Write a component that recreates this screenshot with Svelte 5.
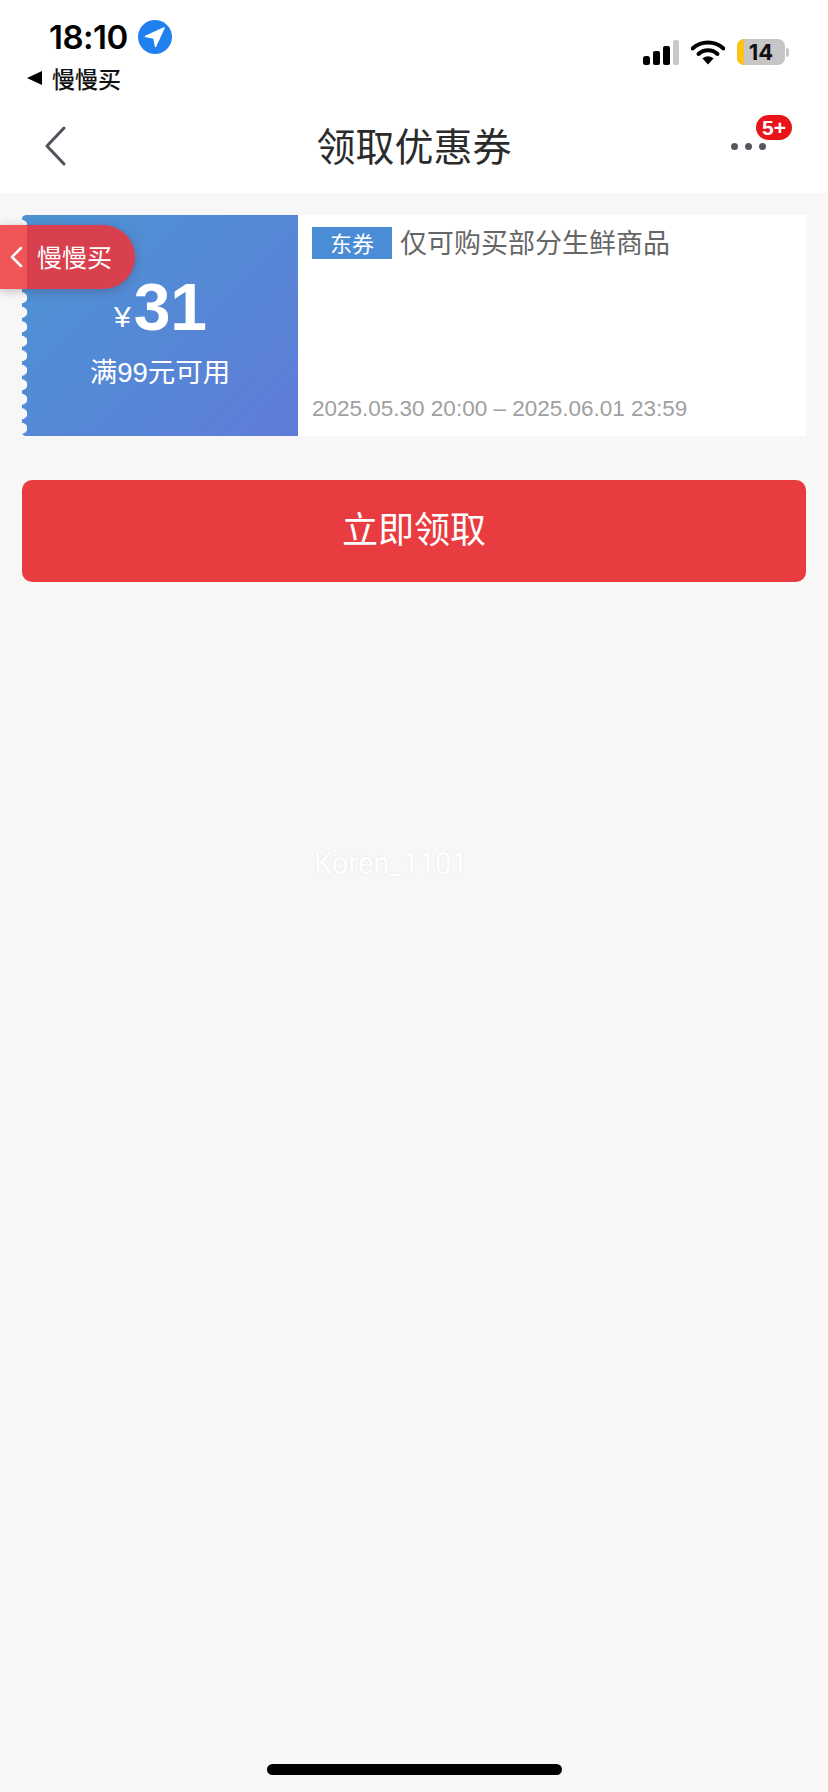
<script>
	const coupon = {
		price: '31',
		rule: '满99元可用',
		tag: '东券',
		title: '仅可购买部分生鲜商品',
		period: '2025.05.30 20:00 – 2025.06.01 23:59'
	};
</script>

<div class="page">
	<header class="top">
		<div class="status">
			<div class="status-left">
				<div class="time-row">
					<span class="time">18:10</span>
					<svg class="loc" width="34" height="34" viewBox="0 0 34 34">
						<circle cx="17" cy="17" r="17" fill="#1f80ee" />
						<path d="M26 8 L7.500 16.500 L16 18 L17.500 26.500 Z" fill="#fff" stroke="#fff" stroke-width="1.500" stroke-linejoin="round" />
					</svg>
				</div>
				<div class="return-row">
					<span class="return-arrow"></span>
					<span class="return-label">慢慢买</span>
				</div>
			</div>
			<div class="status-right">
				<svg width="36" height="25" viewBox="0 0 36 25">
					<rect x="0" y="16" width="7" height="9" rx="2.500" fill="#000" />
					<rect x="10" y="11" width="7" height="14" rx="2" fill="#000" />
					<rect x="20" y="6" width="7" height="19" rx="2" fill="#000" />
					<rect x="30" y="0" width="6" height="25" rx="2" fill="#c8c8c8" />
				</svg>
				<svg class="wifi" width="34" height="25" viewBox="0 0 34 25">
					<path d="M1.500 8.500 C10 0.500 24 0.500 32.500 8.500" fill="none" stroke="#000" stroke-width="4" stroke-linecap="round" />
					<path d="M7.500 14 C13 9 21 9 26.500 14" fill="none" stroke="#000" stroke-width="4" stroke-linecap="round" />
					<path d="M11.500 18.500 C15 15.500 19 15.500 22.500 18.500 L17 24.500 Z" fill="#000" />
				</svg>
				<div class="battery">
					<div class="battery-body">
						<span class="battery-fill"></span>
						<span class="battery-num">14</span>
					</div>
					<span class="battery-nub"></span>
				</div>
			</div>
		</div>

		<nav class="nav">
			<svg class="back" width="22" height="40" viewBox="0 0 22 40">
				<path d="M20 2 L3 20 L20 38" fill="none" stroke="#4e525a" stroke-width="3" stroke-linecap="round" stroke-linejoin="round" />
			</svg>
			<h1>领取优惠券</h1>
			<div class="more">
				<span class="dot"></span>
				<span class="dot"></span>
				<span class="dot"></span>
				<span class="badge">5+</span>
			</div>
		</nav>
	</header>

	<main class="content">
		<section class="coupon">
			<div class="coupon-left">
				<div class="amount">
					<span class="yen">¥</span><span class="price">{coupon.price}</span>
				</div>
				<div class="rule">{coupon.rule}</div>
			</div>
			<div class="coupon-right">
				<div class="title-row">
					<span class="tag">{coupon.tag}</span>
					<span class="title">{coupon.title}</span>
				</div>
				<div class="period">{coupon.period}</div>
			</div>
		</section>

		<button class="claim"><span>立即领取</span></button>
	</main>

	<div class="home-bar"></div>

	<!-- floating return pill, sits over the coupon -->
	<div class="float-back">
		<span class="float-arrow">
			<svg width="14" height="22" viewBox="0 0 14 22">
				<path d="M12 2 L3 11 L12 20" fill="none" stroke="#fff" stroke-width="2.500" stroke-linecap="round" stroke-linejoin="round" />
			</svg>
		</span>
		<span class="float-label">慢慢买</span>
	</div>

	<div class="watermark">Koren_1101</div>
</div>

<style>
	:global(body) {
		background: #f7f7f7;
	}

	.page {
		position: relative;
		width: 828px;
		height: 1792px;
		display: flex;
		flex-direction: column;
		overflow: hidden;
		background: #f7f7f7;
		font-family: "Liberation Sans", "Noto Sans CJK SC", sans-serif;
	}

	.top {
		background: #fff;
		height: 193px;
	}

	.status {
		height: 100px;
		display: flex;
		justify-content: space-between;
	}

	.status-left {
		padding: 20px 0 0 27px;
	}

	.time-row {
		display: flex;
		align-items: center;
		height: 34px;
		padding-left: 22px;
		gap: 10px;
	}

	.time {
		font-family: Inter, sans-serif;
		font-size: 33px;
		font-weight: 600;
		letter-spacing: -0.5px;
		color: #000;
	}

	.return-row {
		display: flex;
		align-items: center;
		gap: 10px;
		margin-top: 9px;
		height: 30px;
	}

	.return-arrow {
		width: 0;
		height: 0;
		border-top: 7px solid transparent;
		border-bottom: 7px solid transparent;
		border-right: 15px solid #000;
	}

	.return-label {
		font-family: "Noto Sans CJK SC", sans-serif;
		font-size: 23px;
		font-weight: 500;
		color: #111;
	}

	.status-right {
		display: flex;
		align-items: flex-start;
		padding: 40px 39px 0 0;
		gap: 12px;
	}

	.wifi {
		display: block;
	}

	.battery {
		display: flex;
		align-items: center;
		gap: 1px;
		margin-top: -1px;
	}

	.battery-body {
		position: relative;
		width: 48px;
		height: 26px;
		border-radius: 7px;
		overflow: hidden;
		background: #c6c6c6;
		text-align: center;
	}

	.battery-fill {
		position: absolute;
		left: 0;
		top: 0;
		bottom: 0;
		width: 7px;
		background: #fcc419;
	}

	.battery-num {
		position: relative;
		font-family: Inter, sans-serif;
		font-size: 22px;
		font-weight: 700;
		line-height: 26px;
		color: #111;
	}

	.battery-nub {
		width: 3px;
		height: 9px;
		border-radius: 0 3px 3px 0;
		background: #c6c6c6;
	}

	.nav {
		position: relative;
		height: 93px;
		display: flex;
		align-items: center;
		justify-content: center;
	}

	.back {
		position: absolute;
		left: 44px;
		top: 26px;
	}

	h1 {
		margin: 0;
		font-family: "Noto Sans CJK SC", sans-serif;
		font-size: 39px;
		font-weight: 400;
		color: #2b2b2b;
		transform: translateY(-3px);
	}

	.more {
		position: absolute;
		left: 731px;
		top: 43px;
		display: flex;
		gap: 7px;
	}

	.dot {
		width: 7px;
		height: 7px;
		border-radius: 50%;
		background: #55585e;
	}

	.badge {
		position: absolute;
		left: 25px;
		top: -28px;
		width: 36px;
		height: 25px;
		border-radius: 13px;
		background: #e8141a;
		color: #fff;
		font-size: 21px;
		font-weight: 700;
		line-height: 25px;
		text-align: center;
	}

	.content {
		padding: 22px 22px 0;
	}

	.coupon {
		display: flex;
		height: 221px;
		background: #fff;
	}

	.coupon-left {
		position: relative;
		width: 276px;
		box-sizing: border-box;
		padding-top: 63px;
		text-align: center;
		color: #fff;
		background: linear-gradient(135deg, #4b94d3, #5f7cd8);
		border-radius: 4px 0 0 4px;
	}

	.coupon-left::before {
		content: "";
		position: absolute;
		left: 0;
		top: 0;
		bottom: 0;
		width: 6px;
		background: radial-gradient(circle at 0 50%, #f9f9f9 5px, transparent 5.6px) 0 3px / 6px 14.500px repeat-y;
	}

	.amount {
		height: 58px;
		display: flex;
		justify-content: center;
		align-items: baseline;
		padding-left: 1px;
	}

	.yen {
		font-size: 30px;
		margin-right: 3px;
		transform: translateY(-3px);
	}

	.price {
		font-size: 66px;
		font-weight: 700;
		line-height: 58px;
	}

	.rule {
		margin-top: 22px;
		font-size: 27.500px;
		line-height: 30px;
	}

	.coupon-right {
		flex: 1;
		padding: 12px 14px 0 14px;
		display: flex;
		flex-direction: column;
		justify-content: space-between;
	}

	.title-row {
		display: flex;
		align-items: center;
		height: 32px;
		gap: 8px;
	}

	.tag {
		width: 80px;
		height: 32px;
		line-height: 30px;
		text-align: center;
		font-family: "Noto Sans CJK SC", sans-serif;
		font-size: 22px;
		color: #fff;
		background: #4a8cd5;
	}

	.title {
		font-family: "Noto Sans CJK SC", sans-serif;
		font-size: 27px;
		line-height: 28px;
		margin-top: -2px;
		color: #666;
	}

	.period {
		font-size: 22.500px;
		line-height: 28px;
		color: #a0a0a0;
		margin-bottom: 13px;
		white-space: nowrap;
	}

	.claim {
		display: block;
		width: 100%;
		height: 102px;
		margin-top: 44px;
		padding: 0 0 8px;
		border: none;
		border-radius: 10px;
		background: #e83c40;
		color: #fff;
		font-family: "Noto Sans CJK SC", sans-serif;
		font-size: 36px;
	}

	.home-bar {
		width: 295px;
		height: 11px;
		margin: auto auto 17px;
		border-radius: 6px;
		background: #000;
	}

	.float-back {
		position: absolute;
		left: 0;
		top: 225px;
		width: 135px;
		height: 64px;
		display: flex;
		align-items: center;
		border-radius: 0 32px 32px 0;
		overflow: hidden;
		background: #d8404e;
		box-shadow: 0 2px 10px rgba(80, 40, 60, 0.3);
		color: #fff;
	}

	.float-arrow {
		width: 27px;
		height: 64px;
		flex: none;
		display: flex;
		align-items: center;
		padding-left: 9px;
		box-sizing: border-box;
		background: #f05558;
	}

	.float-label {
		margin: -2px 0 0 10px;
		font-family: "Noto Sans CJK SC", sans-serif;
		font-size: 25px;
	}

	.watermark {
		position: absolute;
		left: 314px;
		top: 846px;
		font-family: Roboto, sans-serif;
		font-size: 29px;
		transform: scaleY(1.05);
		color: #fff;
		text-shadow: 0 0 2px rgba(0, 0, 0, 0.1);
	}
</style>
